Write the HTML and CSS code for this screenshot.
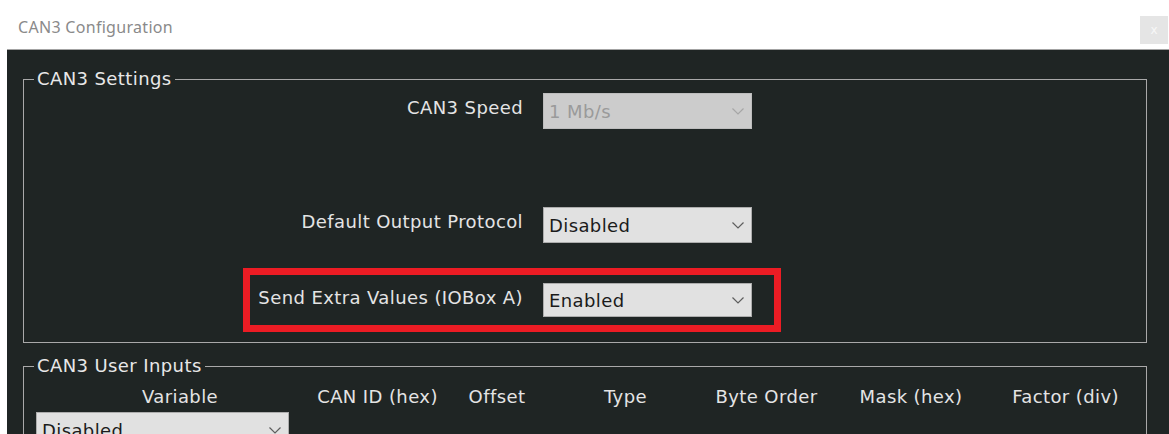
FILE: index.html
```html
<!DOCTYPE html>
<html lang="en">
<head>
<meta charset="utf-8">
<title>CAN3 Configuration</title>
<link rel="stylesheet" href="styles.css">
</head>
<body>
  <header class="titlebar">
    <span class="title">CAN3 Configuration</span>
    <button class="close" type="button" aria-label="Close">x</button>
  </header>

  <main class="window">
    <fieldset class="group settings">
      <legend>CAN3 Settings</legend>

      <div class="row row-speed">
        <label class="row-label">CAN3 Speed</label>
        <div class="select disabled">
          <span>1 Mb/s</span>
          <svg class="chev" viewBox="0 0 12 7" width="12" height="7"><polyline points="0.5,0.5 6,6 11.5,0.5"/></svg>
        </div>
      </div>

      <div class="row row-protocol">
        <label class="row-label">Default Output Protocol</label>
        <div class="select">
          <span>Disabled</span>
          <svg class="chev" viewBox="0 0 12 7" width="12" height="7"><polyline points="0.5,0.5 6,6 11.5,0.5"/></svg>
        </div>
      </div>

      <div class="row row-extra highlight">
        <label class="row-label">Send Extra Values (IOBox A)</label>
        <div class="select short">
          <span>Enabled</span>
          <svg class="chev" viewBox="0 0 12 7" width="12" height="7"><polyline points="0.5,0.5 6,6 11.5,0.5"/></svg>
        </div>
      </div>
    </fieldset>

    <fieldset class="group inputs">
      <legend>CAN3 User Inputs</legend>
      <div class="grid">
        <div class="head">Variable</div>
        <div class="head">CAN ID (hex)</div>
        <div class="head">Offset</div>
        <div class="head">Type</div>
        <div class="head">Byte Order</div>
        <div class="head">Mask (hex)</div>
        <div class="head">Factor (div)</div>

        <div class="cell">
          <div class="select wide">
            <span>Disabled</span>
            <svg class="chev" viewBox="0 0 12 7" width="12" height="7"><polyline points="0.5,0.5 6,6 11.5,0.5"/></svg>
          </div>
        </div>
      </div>
    </fieldset>
  </main>
</body>
</html>
```

FILE: styles.css
```css
*,
*::before,
*::after {
  box-sizing: border-box;
}

html, body {
  margin: 0;
  padding: 0;
  background: #ffffff;
  overflow: hidden;
}

body {
  width: 1169px;
  height: 434px;
  font-family: "DejaVu Sans", "Liberation Sans", sans-serif;
}

/* ---- title bar ---- */
.titlebar {
  height: 49px;
  display: flex;
  justify-content: space-between;
  align-items: flex-start;
}

.title {
  margin: 17px 0 0 18px;
  font-family: "Noto Sans", "Open Sans", sans-serif;
  font-size: 16px;
  line-height: 20px;
  letter-spacing: 0.3px;
  color: #8a8a8a;
}

.close {
  margin: 16px 1px 0 0;
  width: 28px;
  height: 28px;
  padding: 0;
  border: none;
  background: #e5e5e5;
  color: #f7f7f7;
  font-family: "DejaVu Sans", sans-serif;
  font-size: 12px;
  line-height: 28px;
}

/* ---- dark dialog body ---- */
.window {
  margin-left: 7px;
  height: 385px;
  background: #1f2524;
  border-top: 1px solid #a3a3a3;
  padding: 0 0 0 16px;
  color: #e4e4e4;
  font-size: 18px;
  letter-spacing: 0.4px;
}

.group {
  margin: 0;
  min-width: 0;
  width: 1124px;
  border: 1px solid #a9a9a9;
  padding: 0;
}

.group legend {
  margin-left: 10px;
  padding: 0 3px;
  font-size: 18px;
  line-height: 22px;
  color: #e8e8e8;
}

.settings {
  margin-top: 18px;
  padding: 3px 0 25px 0;
}

.inputs {
  margin-top: 12px;
  padding: 9px 0 0 0;
}

/* ---- label / dropdown rows ---- */
.row {
  display: grid;
  grid-template-columns: 499px 209px;
  column-gap: 20px;
  align-items: start;
}

.row-protocol {
  margin-top: 78px;
}

.row-extra {
  margin-top: 40px;
}

.row-label {
  margin-top: 4px;
  line-height: 22px;
  text-align: right;
  white-space: nowrap;
}

.highlight {
  position: relative;
}

/* red annotation frame drawn on top of the row */
.highlight::after {
  content: "";
  position: absolute;
  left: 219px;
  top: -15px;
  width: 538px;
  height: 64px;
  border: 7px solid #ec1c24;
  pointer-events: none;
}

/* ---- dropdowns ---- */
.select {
  height: 36px;
  display: flex;
  align-items: center;
  justify-content: space-between;
  padding: 0 7px 0 5px;
  background: #e1e1e1;
  border: 1px solid #adadad;
  color: #1b1b1b;
  font-size: 18px;
  white-space: nowrap;
}

.select.short {
  height: 34px;
}

.select.wide {
  width: 253px;
}

.select.disabled {
  background: #cccccc;
  border-color: #bdbdbd;
  color: #9a9a9a;
}

.chev {
  flex: none;
  fill: none;
  stroke: #5e5e5e;
  stroke-width: 1.2;
}

.disabled .chev {
  stroke: #a6a6a6;
}

/* ---- user input table ---- */
.grid {
  margin-left: 12px;
  display: grid;
  grid-template-columns: 288px 107px 132px 125px 157px 132px 177px;
  row-gap: 4px;
}

.head {
  display: flex;
  justify-content: center;
  line-height: 22px;
  white-space: nowrap;
}
```
